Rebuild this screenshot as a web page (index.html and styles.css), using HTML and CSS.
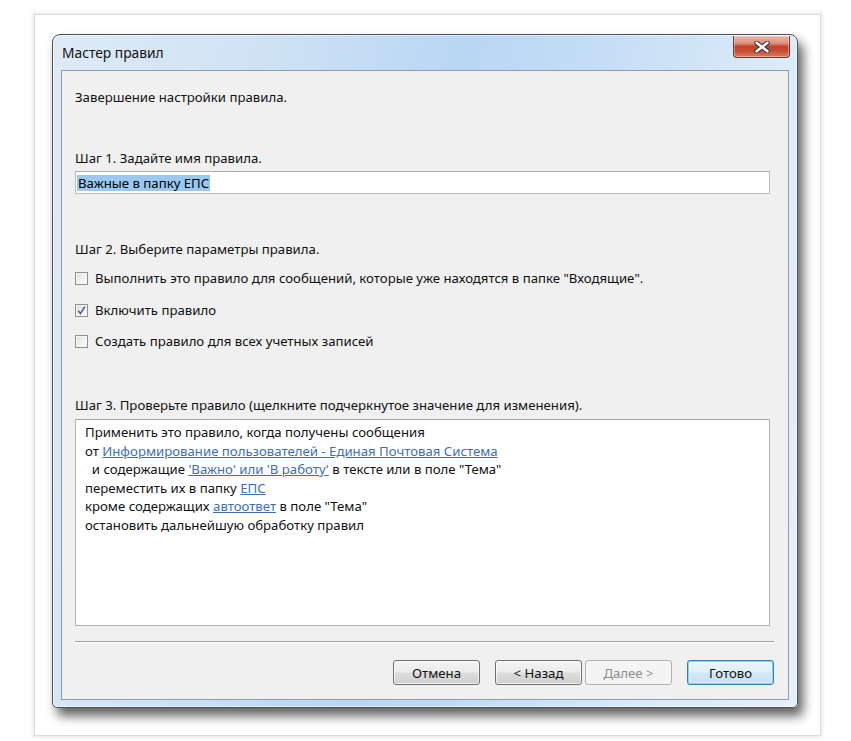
FILE: index.html
```html
<!DOCTYPE html>
<html lang="ru">
<head>
<meta charset="utf-8">
<title>Мастер правил</title>
<link rel="stylesheet" href="styles.css">
</head>
<body>
<div class="frame">
  <div class="window">
    <div class="titlebar">
      <div class="title">Мастер правил</div>
      <div class="close">
        <svg width="16" height="12" viewBox="0 0 16 12">
          <path d="M2.5 1.8 L13.5 10.2 M13.5 1.8 L2.5 10.2" stroke="#3b3b3b" stroke-width="4.6" stroke-linecap="round"/>
          <path d="M2.5 1.8 L13.5 10.2 M13.5 1.8 L2.5 10.2" stroke="#ffffff" stroke-width="2.4" stroke-linecap="round"/>
        </svg>
      </div>
    </div>
    <div class="client">
      <div class="label first">Завершение настройки правила.</div>

      <div class="label step1">Шаг 1. Задайте имя правила.</div>
      <div class="input"><span class="sel">Важные в папку ЕПС</span></div>

      <div class="label step2">Шаг 2. Выберите параметры правила.</div>
      <div class="check c1"><span class="box"></span><span>Выполнить это правило для сообщений, которые уже находятся в папке "Входящие".</span></div>
      <div class="check c2"><span class="box checked">
        <svg width="11" height="11" viewBox="0 0 11 11"><path d="M2.2 5.6 L4.4 8.6 L8.8 1.8" fill="none" stroke="#4b5e9a" stroke-width="1.6"/></svg>
      </span><span>Включить правило</span></div>
      <div class="check c3"><span class="box"></span><span>Создать правило для всех учетных записей</span></div>

      <div class="label step3">Шаг 3. Проверьте правило (щелкните подчеркнутое значение для изменения).</div>
      <div class="rulebox">
        <div>Применить это правило, когда получены сообщения</div>
        <div>от <a href="#" class="link">Информирование пользователей - Единая Почтовая Система</a></div>
        <div class="pre">  и содержащие <a href="#" class="link">'Важно' или 'В работу'</a> в тексте или в поле "Тема"</div>
        <div>переместить их в папку <a href="#" class="link">ЕПС</a></div>
        <div>кроме содержащих <a href="#" class="link">автоответ</a> в поле "Тема"</div>
        <div>остановить дальнейшую обработку правил</div>
      </div>

      <div class="separator"></div>
      <div class="buttons">
        <button class="btn">Отмена</button>
        <button class="btn back">&lt; Назад</button>
        <button class="btn disabled" disabled>Далее &gt;</button>
        <button class="btn default">Готово</button>
      </div>
    </div>
  </div>
</div>
</body>
</html>
```

FILE: styles.css
```css
html, body {
  margin: 0;
  padding: 0;
  background: #ffffff;
}
body {
  width: 851px;
  height: 741px;
  overflow: hidden;
  font-family: "Noto Sans", "Open Sans", sans-serif;
  font-size: 13.2px;
  color: #111111;
}
.frame {
  margin: 14px 0 0 34px;
  width: 787px;
  height: 722px;
  box-sizing: border-box;
  border: 1px solid #dcdcdc;
  box-shadow: 0 0 3px 2px rgba(0,0,0,0.07);
  padding: 19px 0 0 17px;
  background: #fff;
}
.window {
  width: 746px;
  height: 674px;
  box-sizing: border-box;
  border: 1px solid #4c525b;
  border-radius: 8px 8px 5px 5px;
  background: linear-gradient(100deg, #dfeaf6 0%, #cfe2f5 25%, #b9d6f4 48%, #c6def6 65%, #dcebf9 85%, #e6f0fa 100%);
  box-shadow: 5px 8px 11px rgba(0,0,0,0.62), inset 0 0 0 1px rgba(255,255,255,0.55);
  display: flex;
  flex-direction: column;
}
.titlebar {
  height: 35px;
  display: flex;
  align-items: flex-start;
  padding-left: 9px;
  padding-right: 7px;
}
.title {
  flex: 1;
  padding-top: 9px;
  font-size: 13.8px;
  line-height: 17px;
  color: #111;
}
.close {
  width: 57px;
  height: 22px;
  margin-top: 1px;
  box-sizing: border-box;
  border: 1px solid #6d3a32;
  border-top: none;
  border-radius: 0 0 4px 4px;
  background: linear-gradient(#eab4a8 0%, #dd8f7f 35%, #c5412b 50%, #c84a33 70%, #dd7a64 100%);
  box-shadow: inset 0 0 0 1px rgba(255,255,255,0.35);
  display: flex;
  align-items: center;
  justify-content: center;
}
.client {
  margin: 0 8px;
  height: 630px;
  box-sizing: border-box;
  background: #f0f0f0;
  border: 1px solid #8f9cab;
  padding: 0 14px 0 13px;
  display: flex;
  flex-direction: column;
}
.label {
  line-height: 16px;
  height: 16px;
  white-space: nowrap;
}
.first { margin-top: 18px; }
.step1 { margin-top: 45px; }
.input {
  margin-top: 5px;
  margin-right: 4px;
  height: 23px;
  box-sizing: border-box;
  background: #fff;
  border: 1px solid #b9bcc3;
  border-top-color: #abadb3;
  padding: 3px 0 0 1px;
  line-height: 16px;
}
.sel {
  background: #99c8f2;
  color: #000;
  padding: 0 1px;
  display: inline-block;
  height: 16px;
}
.step2 { margin-top: 47px; }
.check {
  display: flex;
  align-items: center;
  height: 16px;
  line-height: 16px;
  white-space: nowrap;
}
.c1 { margin-top: 13px; }
.c2 { margin-top: 16px; }
.c3 { margin-top: 15px; }
.box {
  width: 13px;
  height: 13px;
  box-sizing: border-box;
  border: 1px solid #8e8f8f;
  background: linear-gradient(135deg, #dcdcdc 0%, #f4f4f4 60%, #ffffff 100%);
  box-shadow: inset 0 0 0 1px #f6f6f6;
  margin-right: 7px;
  display: flex;
  align-items: center;
  justify-content: center;
  flex-shrink: 0;
}
.step3 { margin-top: 48px; }
.rulebox {
  margin-top: 6px;
  margin-right: 4px;
  height: 207px;
  box-sizing: border-box;
  background: #fff;
  border: 1px solid #b0b2b8;
  border-top-color: #a6a8ae;
  padding: 3px 0 0 9px;
  line-height: 18.5px;
  color: #111;
}
.pre { white-space: pre; }
.link {
  color: #3d6fb5;
  text-decoration: underline;
}
.separator {
  margin-top: 15px;
  height: 1px;
  background: #a0a0a0;
  border-bottom: 1px solid #fdfdfd;
}
.buttons {
  margin-top: 17px;
  display: flex;
  justify-content: flex-end;
}
.btn {
  width: 87px;
  height: 25px;
  box-sizing: border-box;
  font-family: inherit;
  font-size: 13.2px;
  color: #111;
  border: 1px solid #707070;
  border-radius: 3px;
  background: linear-gradient(#f3f3f3 0%, #ebebeb 48%, #dddddd 52%, #cfcfcf 100%);
  box-shadow: inset 0 0 0 1px rgba(255,255,255,0.7);
  padding: 0;
  margin-left: 15px;
}
.btn.disabled {
  margin-left: 3px;
  border-color: #adb2b5;
  background: #f4f4f4;
  color: #8d8d8d;
  box-shadow: none;
}
.btn.default {
  border-color: #3c7fb1;
  box-shadow: inset 0 0 0 1px #7ed4f5, inset 0 0 0 2px rgba(255,255,255,0.4);
  background: linear-gradient(#eaf6fd 0%, #e0eff8 48%, #d2e8f6 52%, #c5e0f1 100%);
}
```
